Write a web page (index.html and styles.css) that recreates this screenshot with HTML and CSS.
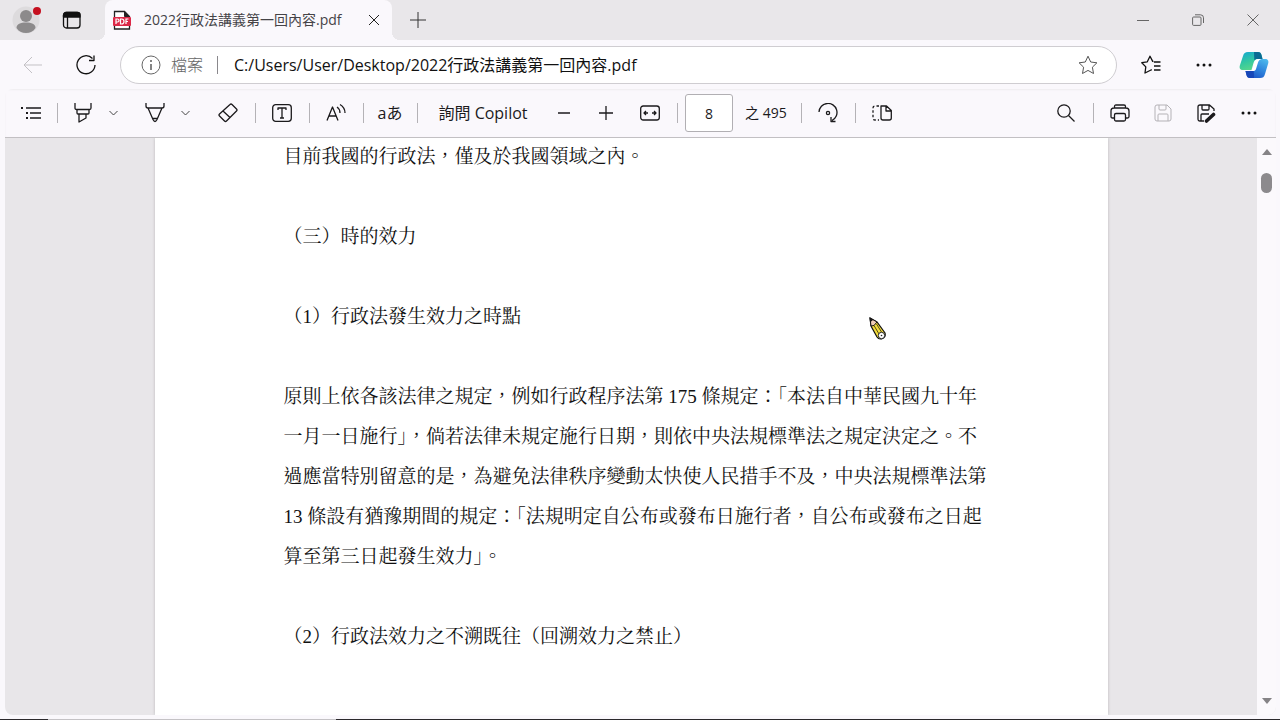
FILE: index.html
```html
<!DOCTYPE html>
<html lang="zh-Hant">
<head>
<meta charset="utf-8">
<title>2022行政法講義第一回內容.pdf</title>
<link rel="stylesheet" href="styles.css">
</head>
<body>
<div class="browser">
  <header class="tabstrip">
    <button class="profile" aria-label="設定檔">
      <svg width="28" height="28" viewBox="0 0 28 28"><circle cx="14" cy="14" r="13.500" fill="#dddbdd"/><circle cx="14" cy="10" r="6" fill="#8c8a8b"/><path d="M4.500 22c0-4 4-5.500 9.500-5.500s9.500 1.500 9.500 5.500c-2 3.500-5.500 5-9.500 5s-7.500-1.500-9.500-5z" fill="#8c8a8b"/></svg>
      <span class="badge"></span>
    </button>
    <button class="workspace" aria-label="索引標籤動作">
      <svg class="ico thick" width="20" height="20" viewBox="0 0 20 20"><rect x="1.500" y="2.500" width="16.500" height="15.500" rx="3"/><path d="M1.500 7V5A2.500 2.500 0 0 1 4 2.500h11.500A2.500 2.500 0 0 1 18 5v2z" fill="#111"/><path d="M5.500 7v11"/></svg>
    </button>
    <div class="tab">
      <svg width="20" height="20" viewBox="0 0 20 20"><path d="M2.500 7V1.500h10l5 5V7M2.500 15v4h15v-4" fill="#fff" stroke="#222" stroke-width="1.300"/><path d="M12.500 1.500v5h5z" fill="#222" stroke="#222"/><rect x="1" y="7" width="18" height="9" rx="1" fill="#dc2948"/><path d="M4 14V9h1.500a1.400 1.400 0 0 1 0 3H4M8.500 9v5h1a2.500 2.500 0 0 0 0-5zM16.500 9H14v5M14 11.500h2" fill="none" stroke="#fff" stroke-width="1.200"/></svg>
      <span class="tab-title">2022行政法講義第一回內容.pdf</span>
      <button class="tab-close" aria-label="關閉索引標籤"><svg class="ico" width="12" height="12" viewBox="0 0 12 12"><path d="M1 1l10 10M11 1L1 11"/></svg></button>
    </div>
    <button class="new-tab" aria-label="新增索引標籤"><svg class="ico" width="18" height="18" viewBox="0 0 18 18"><path d="M9 1v16M1 9h16"/></svg></button>
    <div class="window-buttons">
      <button aria-label="最小化"><svg class="ico" width="12" height="12" viewBox="0 0 12 12"><path d="M0 6.500h12"/></svg></button>
      <button aria-label="還原"><svg class="ico" width="12" height="12" viewBox="0 0 12 12"><rect x=".6" y="3" width="8.400" height="8.400" rx="1"/><path d="M3 .8h5.500a3 3 0 0 1 3 3V9"/></svg></button>
      <button aria-label="關閉"><svg class="ico" width="12" height="12" viewBox="0 0 12 12"><path d="M.5.500l11 11M11.500.500l-11 11"/></svg></button>
    </div>
  </header>

  <nav class="navbar">
    <button class="back" aria-label="上一頁" disabled><svg class="ico" width="20" height="18" viewBox="0 0 20 18"><path d="M19 9H1.500M9 1L1 9l8 8"/></svg></button>
    <button class="reload" aria-label="重新整理"><svg class="ico thick" width="20" height="20" viewBox="0 0 20 20"><path d="M16.500 3.500A9 9 0 1 0 19 10"/><path d="M18 .5v5h-5"/></svg></button>
    <div class="address">
      <svg class="ico info" width="20" height="20" viewBox="0 0 20 20"><circle cx="10" cy="10" r="9"/><path d="M10 9v6M10 5v2" stroke-width="1.600"/></svg>
      <label class="scheme" for="url">檔案</label>
      <span class="address-sep"></span>
      <input class="url" id="url" type="text" value="C:/Users/User/Desktop/2022行政法講義第一回內容.pdf">
      <button class="star" aria-label="加入我的最愛"><svg class="ico" width="20" height="20" viewBox="0 0 20 20"><path d="M10 1.200l2.700 5.800 6.200.8-4.500 4.400 1.100 6.300L10 15.400l-5.500 3.100 1.100-6.300L1.100 7.800l6.200-.8z"/></svg></button>
    </div>
    <button class="nav-button" aria-label="我的最愛"><svg class="ico thick" width="20" height="20" viewBox="0 0 20 20"><path d="M12.500 6.500L11.700 6.400 9 1.200 6.300 6.800.8 7.700l4 4.200L4 18l5-2.500 1.800-.8M13 7h6.500M13 11h6.500M13 15h6.500"/></svg></button>
    <button class="nav-button" aria-label="設定及其他"><svg width="18" height="6" viewBox="0 0 18 6"><g fill="#111"><circle cx="3" cy="3" r="1.500"/><circle cx="9" cy="3" r="1.500"/><circle cx="15" cy="3" r="1.500"/></g></svg></button>
    <button class="copilot" aria-label="Copilot">
      <svg width="30" height="28" viewBox="0 0 30 28"><defs><linearGradient id="g1" x1="0" y1="0" x2=".4" y2="1"><stop offset="0" stop-color="#12a6d2"/><stop offset=".6" stop-color="#35c99f"/><stop offset="1" stop-color="#56d68d"/></linearGradient><linearGradient id="g2" x1=".8" y1="0" x2=".2" y2="1"><stop offset="0" stop-color="#4bb8ec"/><stop offset=".5" stop-color="#2e83dc"/><stop offset="1" stop-color="#1c50c4"/></linearGradient></defs><path d="M9 1h10c2 0 3 1 3.500 3l1 4h-4c-3 0-4 1-5 4l-2 7H4C1 19 0 17 1 14L4 5c1-3 2-4 5-4z" fill="url(#g1)"/><path d="M15 1h4c2 0 3 1 3.500 3l1 4h-5c-1.500 0-2.500.4-3.200 1.200z" fill="#0a6b94"/><path d="M21 27H11c-2 0-3-1-3.500-3l-1-4h4c3 0 4-1 5-4l2.500-8h8c3 0 4 2 3 5l-3 10c-1 3-2 4-5 4z" fill="url(#g2)"/><path d="M15 27h-4c-2 0-3-1-3.500-3l-1-4h5c1.500 0 2.500-.4 3.200-1.200z" fill="#1746b8"/><path d="M18.500 8h4l-1 .5c-1.500.8-2 1.500-2.500 3l-2 6.500c-.5 1.500-1.500 2-3 2h-3.500c2-.3 3-1.500 3.500-3l2-6c.5-2 1.200-2.600 2.500-3z" fill="#fff"/></svg>
    </button>
  </nav>

  <main class="viewer">
    <div class="toolbar">
      <button class="tool" aria-label="目錄"><svg class="ico thick" width="20" height="14" viewBox="0 0 20 14"><path d="M5 2h15M9 7h11M9 12h11"/><path d="M0 2h2M5 7h2M5 12h2" stroke-width="2"/></svg></button>
      <span class="sep sep-first"></span>
      <button class="tool" aria-label="醒目提示"><svg class="ico thick" width="20" height="20" viewBox="0 0 20 20"><path d="M2 0v5q0 1.500 1.500 1.500h13Q18 6.500 18 5V0M4 6.500V10q0 1 1 1h10q1 0 1-1V6.500M6 11v8l7-4v-4"/></svg></button>
      <button class="tool caret" aria-label="醒目提示選項"><svg class="ico" width="9" height="6" viewBox="0 0 9 6"><path d="M.5 1l4 4 4-4"/></svg></button>
      <button class="tool draw" aria-label="繪製"><svg class="ico thick" width="20" height="20" viewBox="0 0 20 20"><path d="M1 0v3q0 2 2 2h14q2 0 2-2V0M3 5l5 11.500q2 4 4 0L17 5M7.500 15.500h5"/></svg></button>
      <button class="tool caret" aria-label="繪製選項"><svg class="ico" width="9" height="6" viewBox="0 0 9 6"><path d="M.5 1l4 4 4-4"/></svg></button>
      <button class="tool spaced" aria-label="清除"><svg class="ico thick" width="20" height="20" viewBox="0 0 20 20"><path d="M12 1.500q1-1 2 0l4.500 4.500q1 1 0 2L8.500 18q-1 1-2 0L1.500 13q-1-1 0-2zM5 8l7 6.500"/></svg></button>
      <span class="sep"></span>
      <button class="tool" aria-label="新增文字"><svg class="ico thick" width="20" height="18" viewBox="0 0 20 18"><rect x=".7" y=".7" width="18.600" height="16.600" rx="3"/><path d="M6 6V4h8v2M10 4v10M8 14h4"/></svg></button>
      <span class="sep"></span>
      <button class="tool" aria-label="朗讀"><svg class="ico thick" width="20" height="20" viewBox="0 0 20 20"><path d="M1 17.500L6.500 4 12 17.500M3 13h7M11 4q3 2 3 6M14 1.500q5 3 5 8.500"/></svg></button>
      <span class="sep"></span>
      <button class="tool" aria-label="翻譯">aあ</button>
      <span class="sep"></span>
      <button class="ask">詢問 Copilot</button>
      <button class="tool zoom-button" aria-label="縮小"><svg class="ico thick" width="14" height="14" viewBox="0 0 14 14"><path d="M1 7h12"/></svg></button>
      <button class="tool zoom-button" aria-label="放大"><svg class="ico thick" width="14" height="14" viewBox="0 0 14 14"><path d="M0 7h14M7 0v14"/></svg></button>
      <button class="tool fit" aria-label="符合寬度"><svg class="ico thick" width="20" height="16" viewBox="0 0 20 16"><rect x=".7" y="1" width="18.600" height="14" rx="2.500"/><path d="M8 8H4m2-2L4 8l2 2M12 8h4m-2-2l2 2-2 2"/></svg></button>
      <span class="sep"></span>
      <input class="page-number" type="text" value="8" aria-label="頁碼">
      <span class="page-count">之 495</span>
      <span class="sep"></span>
      <button class="tool" aria-label="旋轉"><svg class="ico thick" width="20" height="20" viewBox="0 0 20 20"><path d="M1 9a9 9 0 1 1 13 8.500M13 14v4.500h4.500"/><circle cx="10" cy="10" r="1.600"/></svg></button>
      <span class="sep"></span>
      <button class="tool" aria-label="頁面檢視"><svg class="ico thick" width="20" height="16" viewBox="0 0 20 16"><path d="M9 1h5.500l4.800 4.500V13q0 2-2 2H11q-2 0-2-2zM14 1v5h5"/><path d="M7 1H3Q1 1 1 3v10q0 2 2 2h4" stroke-dasharray="2.500 2"/></svg></button>
      <div class="toolbar-end">
        <button class="tool" aria-label="尋找"><svg class="ico thick" width="18" height="18" viewBox="0 0 18 18"><circle cx="7" cy="7" r="6.200"/><path d="M11.500 11.500L17.500 17.500"/></svg></button>
        <span class="sep"></span>
        <button class="tool" aria-label="列印"><svg class="ico thick" width="20" height="18" viewBox="0 0 20 18"><path d="M4.500 4V2.500Q4.500 1 6 1h8q1.500 0 1.500 1.500V4M4.500 4h11M4.500 14H2.500Q1 14 1 12.500V7q0-3 3-3h12q3 0 3 3v5.500q0 1.500-1.500 1.500h-2"/><rect x="4.500" y="9.500" width="11" height="7.500" rx="1.500"/></svg></button>
        <button class="tool spaced" aria-label="儲存" disabled><svg class="ico" width="18" height="18" viewBox="0 0 18 18"><path d="M3 1h10l4 4v10q0 2-2 2H3q-2 0-2-2V3q0-2 2-2zM5 1v4q0 1 1 1h5q1 0 1-1V1M4 17v-6q0-1 1-1h8q1 0 1 1v6"/></svg></button>
        <button class="tool spaced" aria-label="另存新檔"><svg class="ico thick" width="19" height="19" viewBox="0 0 19 19"><path d="M7 17H3q-2 0-2-2V3q0-2 2-2h9.500L17 5v2M5 1v4q0 1 1 1h5q1 0 1-1V1M4 17v-6q0-1 1-1h7"/><path d="M9.500 17L16.500 10.500" stroke-width="3.600" stroke-linecap="round"/></svg></button>
        <button class="tool spaced" aria-label="更多"><svg width="18" height="6" viewBox="0 0 18 6"><g fill="#111"><circle cx="3" cy="3" r="1.500"/><circle cx="9" cy="3" r="1.500"/><circle cx="15" cy="3" r="1.500"/></g></svg></button>
      </div>
    </div>

    <div class="document">
      <div class="canvas">
        <article class="page">
          <p>目前我國的行政法，僅及於我國領域之內。</p>
          <p>（三）時的效力</p>
          <p>（1）行政法發生效力之時點</p>
          <p>原則上依各該法律之規定，例如行政程序法第 175 條規定：「本法自中華民國九十年<br>一月一日施行」，倘若法律未規定施行日期，則依中央法規標準法之規定決定之。不<br>過應當特別留意的是，為避免法律秩序變動太快使人民措手不及，中央法規標準法第<br>13 條設有猶豫期間的規定：「法規明定自公布或發布日施行者，自公布或發布之日起<br>算至第三日起發生效力」。</p>
          <p>（2）行政法效力之不溯既往（回溯效力之禁止）</p>
        </article>
      </div>
      <div class="scrollbar">
        <span class="arrow-up"></span>
        <span class="thumb"></span>
        <span class="arrow-down"></span>
      </div>
    </div>
  </main>
  <div class="taskbar-edge"></div>
  <svg class="cursor" width="18" height="24" viewBox="0 0 18 24"><path d="M1 1l1 8 6 11q2 3 5.500 1.500T16 16L8 5z" fill="#f4dc3c" stroke="#111" stroke-width="1.200"/><path d="M1 1l1 8 3-.5L8 5z" fill="#f0cdb8" stroke="#111"/><path d="M1 1l.5 4L4 3z" fill="#111"/><path d="M5 8.500l5 8.500M7.500 7l5 8" stroke="#2a2608" stroke-width=".8"/><circle cx="12.500" cy="18.500" r="3.200" fill="#fff" stroke="#222"/><circle cx="12.500" cy="18.500" r=".8" fill="#222"/></svg>
</div>
</body>
</html>
```
FILE: styles.css
```css
* { box-sizing: border-box; }

body {
  margin: 0;
  font: 16px/20px "Open Sans", "Noto Sans CJK TC", sans-serif;
  font-weight: 400;
  color: #1b1a1c;
  background: #faf8fc;
}

button {
  display: flex;
  align-items: center;
  justify-content: center;
  flex: none;
  padding: 0;
  border: 0;
  background: none;
  font: inherit;
  color: inherit;
}

svg { display: block; flex: none; }
.ico { fill: none; stroke: currentColor; stroke-width: 1; stroke-linejoin: round; }
.thick { stroke-width: 1.3; }

.browser {
  display: flex;
  flex-direction: column;
  height: 100vh;
  overflow: hidden;
}

/* Tabs */
.tabstrip {
  display: flex;
  align-items: center;
  height: 40px;
  flex: none;
  padding-left: 12px;
  background: #e9e7ea;
}
.profile { position: relative; width: 28px; height: 40px; }
.badge {
  position: absolute;
  top: 7px;
  right: -1px;
  width: 8px;
  height: 8px;
  border-radius: 50%;
  background: #c50f1f;
}
.workspace { width: 40px; height: 40px; margin-left: 12px; color: #111; }
.tab {
  position: relative;
  display: flex;
  align-items: center;
  align-self: stretch;
  width: 287px;
  margin-left: 13px;
  padding: 0 11px 0 7px;
  border-radius: 8px 8px 0 0;
  background: #faf8fc;
}
.tab::before, .tab::after {
  content: "";
  position: absolute;
  bottom: 0;
  width: 8px;
  height: 8px;
}
.tab::before { right: 100%; background: radial-gradient(circle at 0 0, #e9e7ea 8px, #faf8fc 8px); }
.tab::after { left: 100%; background: radial-gradient(circle at 100% 0, #e9e7ea 8px, #faf8fc 8px); }
.tab-title { flex: 1; margin-left: 12px; font-size: 14px; white-space: nowrap; color: #454347; }
.tab-close { width: 14px; height: 24px; color: #222; }
.new-tab { width: 36px; height: 36px; margin-left: 8px; color: #333; }
.window-buttons { display: flex; margin-left: auto; }
.window-buttons button { width: 55px; height: 40px; color: #666; }

/* Address row */
.navbar {
  display: flex;
  align-items: center;
  height: 49px;
  flex: none;
  padding: 0 11px 0 18px;
}
.back { width: 30px; height: 30px; color: #c3c1c5; }
.reload { width: 30px; height: 30px; margin-left: 23px; color: #111; }
.address {
  display: flex;
  align-items: center;
  flex: 1;
  height: 38px;
  margin: 0 19px;
  padding: 0 18px 0 20px;
  border: 1px solid #cfcdd1;
  border-radius: 19px;
  background: #fff;
}
.info { color: #666; }
.scheme { margin-left: 10px; font-weight: 300; color: #666; }
.address-sep { width: 1px; height: 18px; margin: 0 16px 0 14px; background: #8a888c; }
.url {
  flex: 1;
  min-width: 0;
  padding: 0;
  border: 0;
  outline: 0;
  background: none;
  font: inherit;
  color: #111;
}
.star { width: 20px; height: 30px; color: #555; }
.nav-button { width: 30px; height: 30px; margin-right: 23px; color: #111; }
.copilot { width: 30px; height: 30px; margin-left: -3px; }

/* PDF viewer */
.viewer {
  display: flex;
  flex-direction: column;
  flex: 1;
  min-height: 0;
  margin: 0 4px 4px 5px;
  overflow: hidden;
  border-radius: 8px;
}
.toolbar {
  display: flex;
  align-items: center;
  height: 49px;
  flex: none;
  padding: 0 12px 0 11px;
  border-bottom: 1px solid #c2c0c3;
  box-shadow: inset 0 1px 2px #eeecef;
}
.tool { width: 30px; height: 32px; }
.tool:disabled { color: #b4b2b6; }
.caret { color: #444; }
.draw { margin-left: 12px; }
.zoom-button { margin-left: 12px; }
.fit { margin-left: 14px; }
.ask { min-width: 108px; height: 32px; white-space: nowrap; }
.sep { flex: none; width: 24px; height: 20px; background: linear-gradient(#b4b2b6, #b4b2b6) center / 1px 100% no-repeat; }
.sep-first { width: 22px; }
.page-number {
  width: 48px;
  height: 38px;
  margin-left: -4px;
  padding: 0;
  border: 1px solid #b1afb3;
  border-radius: 3px;
  background: #fff;
  font-family: inherit;
  font-size: 14px;
  text-align: center;
  color: inherit;
}
.page-count { min-width: 56px; padding-left: 12px; font-size: 14px; white-space: nowrap; }
.toolbar-end { display: flex; align-items: center; margin-left: auto; }
.spaced { margin-left: 13px; }

.document { display: flex; flex: 1; min-height: 0; background: #e8e6e9; }
.canvas { display: flex; justify-content: center; flex: 1; min-width: 0; overflow: hidden; }
.page {
  width: 953px;
  padding: 0 100px 0 129px;
  background: #fff;
  box-shadow: 0 0 3px #bbb9bc;
  font: 19px/40px "Liberation Serif", "Noto Serif CJK TC", "Noto Sans CJK TC", serif;
  color: #111;
  white-space: nowrap;
}
.page p { margin: 0 0 40px; }
.page p:first-child { margin-top: -1px; }

.scrollbar {
  display: flex;
  flex-direction: column;
  align-items: center;
  width: 19px;
  padding: 11px 0;
  background: #fbf9fc;
}
.arrow-up, .arrow-down { border: 5px solid transparent; }
.arrow-up { border-top: 0; border-bottom: 6px solid #858386; }
.arrow-down { margin-top: auto; border-bottom: 0; border-top: 6px solid #858386; }
.thumb { width: 11px; height: 20px; margin-top: 18px; border-radius: 6px; background: #8c8a8d; }

.taskbar-edge {
  flex: none;
  height: 1px;
  background: linear-gradient(90deg, #2b292c 48px, #c4c2c5 48px, #c4c2c5 336px, #2b292c 336px);
}
.cursor { position: absolute; left: 869px; top: 317px; }
```
